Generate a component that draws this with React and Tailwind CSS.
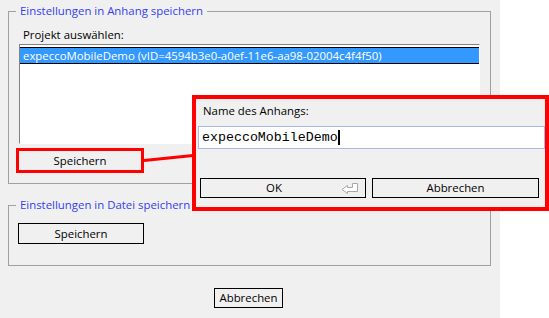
import React from 'react';

/* ---- plain Windows-ish push button ---- */
function Btn({ children, className = '' }) {
  return (
    <div className={`flex items-center justify-center border border-black bg-[#f0f0f0] leading-none ${className}`}>
      {children}
    </div>
  );
}

/* ---- group box ---- */
function Group({ title, className = '', children }) {
  return (
    <fieldset className={`w-[483px] border border-[#a0a0a0] pl-[10px] pr-[9px] ${className}`}>
      <legend className="ml-[-3px] px-[4px] leading-[14px] text-[#3340f0]">{title}</legend>
      {children}
    </fieldset>
  );
}

function EnterIcon() {
  return (
    <svg width="18" height="11" viewBox="0 0 18 11" className="block">
      <path d="M11.5 0.5 H16.5 V8.5 H6.5 V10.5 L1 6.5 L6.5 2.5 V4.5 H11.5 Z" fill="#ffffff" stroke="#a8a8a8" strokeWidth="1" />
    </svg>
  );
}

export default function App() {
  return (
    <div className="relative w-[549px] h-[318px] overflow-hidden bg-white font-['Open_Sans',sans-serif] text-[11.4px] text-black">
      {/* main window */}
      <div className="w-[500px] h-full bg-[#f0f0f0] pt-[4px] pl-[8px]">
        <Group title="Einstellungen in Anhang speichern" className="h-[180px]">
          <p className="pt-[10px] pl-[4px] leading-[14px]">Projekt auswählen:</p>
          <div className="mt-[2px] w-[461px] h-[100px] border-t border-l border-[#828282] border-r border-r-white border-b border-b-white bg-white pt-[2px]">
            <div className="h-[17px] border-y border-black bg-[#3399ff] pl-[3px] leading-[15px] text-white whitespace-nowrap">
              expeccoMobileDemo (vID=4594b3e0-a0ef-11e6-aa98-02004c4f4f50)
            </div>
          </div>
          <div className="mt-[4px] ml-[-3px] w-[128px] h-[25px] border-[3px] border-[#ff0000] flex items-center justify-center">
            Speichern
          </div>
        </Group>

        <Group title="Einstellungen in Datei speichern" className="mt-[14px] h-[68px]">
          <Btn className="mt-[11px] ml-[-1px] w-[126px] h-[21px]">Speichern</Btn>
        </Group>

        <Btn className="mt-[22px] ml-[206px] w-[69px] h-[20px]">Abbrechen</Btn>
      </div>

      {/* connector between the button and the popup */}
      <svg className="absolute left-0 top-0 pointer-events-none" width="549" height="318">
        <line x1="144" y1="160.5" x2="193" y2="155.5" stroke="#ff0000" strokeWidth="3" />
      </svg>

      {/* name popup */}
      <div className="absolute left-[192px] top-[95px] w-[357px] h-[116px] border-4 border-[#ff0000] bg-[#f0f0f0]">
        <p className="pt-[5px] pl-[7px] leading-[14px]">Name des Anhangs:</p>
        <div className="mt-[8px] ml-[2px] w-[347px] h-[23px] border border-[#a9b9e6] bg-white flex items-center pl-[3px] font-['Liberation_Mono',monospace] text-[13.3px]">
          <span>expeccoMobileDemo</span>
          <span className="inline-block w-[2px] h-[15px] bg-black" />
        </div>
        <div className="mt-[29px] ml-[4px] flex gap-[6px]">
          <Btn className="relative w-[166px] h-[20px] pr-[18px]">
            OK
            <span className="absolute right-[6px] top-[4px]">
              <EnterIcon />
            </span>
          </Btn>
          <Btn className="w-[167px] h-[20px]">Abbrechen</Btn>
        </div>
      </div>
    </div>
  );
}
